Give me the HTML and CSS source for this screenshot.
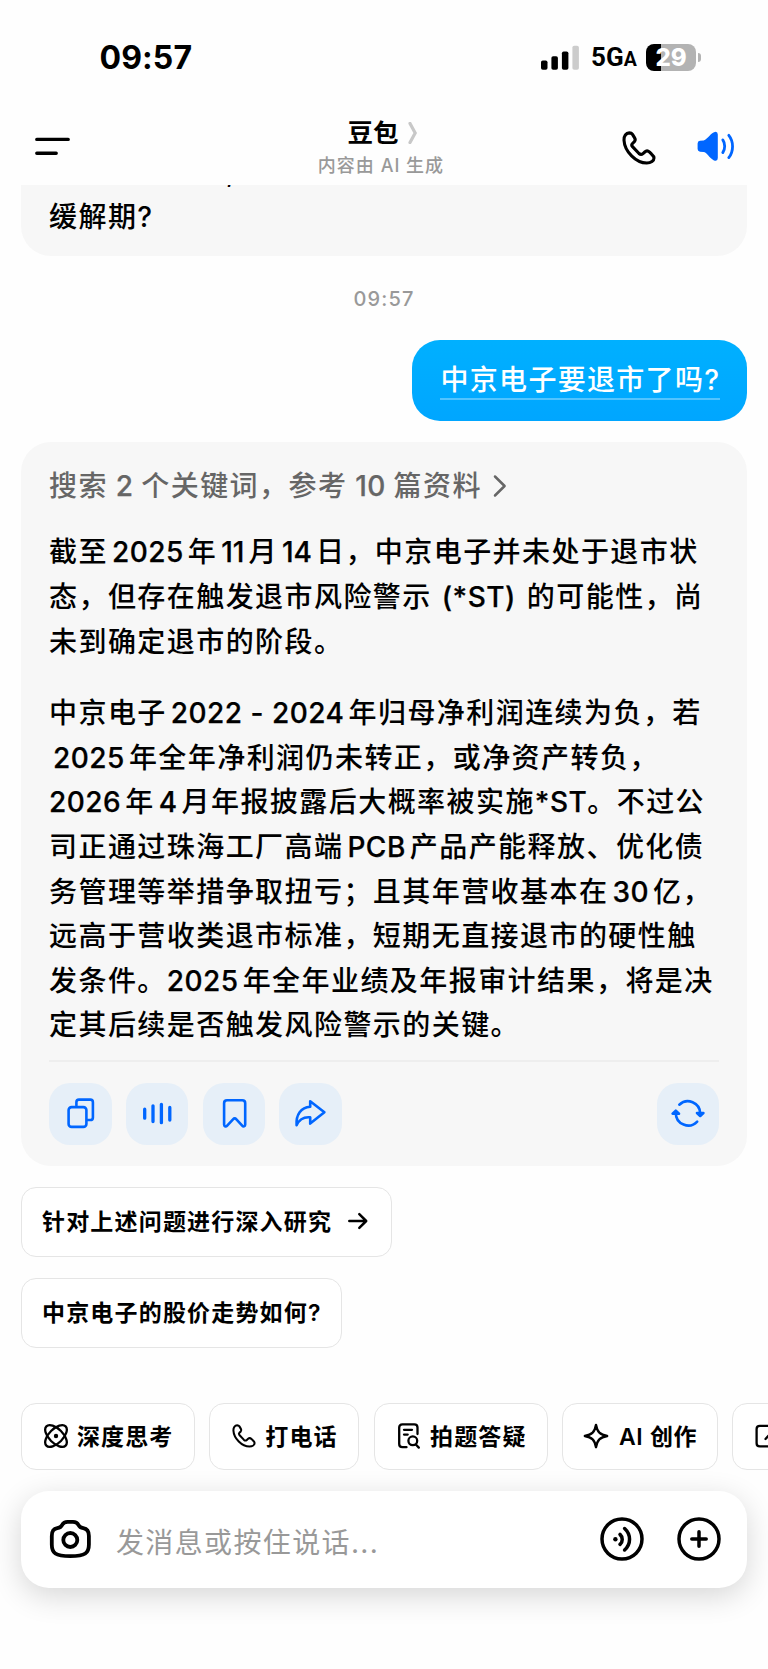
FILE: index.html
```html
<!DOCTYPE html>
<html lang="zh-CN">
<head>
<meta charset="utf-8">
<title>豆包</title>
<link rel="stylesheet" href="styles.css">
</head>
<body>
<svg class="defs" width="0" height="0">
  <symbol id="phone" viewBox="0 0 34 34">
    <path d="M7.3 1.9C4 2 1.8 5 2 9.2C2.6 20.5 14 32 24.8 32C29 32 32 29.6 32 27C32 25.5 31 24.4 29.6 23.2L27.6 21.2C26 19.7 24.2 19.7 22.8 21L21 22.6C19.6 23.8 18.4 23.8 17 22.5L10.5 15.6C9.5 14.5 9.5 13.5 10.5 12.5L12.4 10.6C13.5 9.5 13.5 8.4 12.6 6.9L10.5 3.4C9.8 2.3 8.6 1.9 7.3 1.9Z"/>
  </symbol>
</svg>
<div class="phone">
  <div class="status">
    <div class="clock">09:57</div>
    <div class="indicators">
      <svg width="38" height="26" viewBox="0 0 38 26">
        <rect x="0" y="15.5" width="6.5" height="9.3" rx="1.8"/>
        <rect x="10.4" y="11.3" width="6.5" height="13.5" rx="1.8"/>
        <rect x="20.9" y="6.4" width="6.5" height="18.4" rx="1.8"/>
        <rect x="31.4" y="0.8" width="6.5" height="24" rx="1.8" fill="#ccc"/>
      </svg>
      <div class="network">5G<small>A</small></div>
      <div class="battery">29</div>
      <div class="nub"></div>
    </div>
  </div>

  <header class="header">
    <svg class="menu" width="36" height="20" viewBox="0 0 36 20"><path d="M2.8 3.4H34.2M2.8 17.2H22.2"/></svg>
    <div class="title">
      <h1>豆包<svg width="10" height="22" viewBox="0 0 10 22"><path d="M2 1.4L7.2 11L2 20.6"/></svg></h1>
      <p>内容由 AI 生成</p>
    </div>
    <div class="tools">
      <svg class="call" width="34" height="34"><use href="#phone"/></svg>
      <svg class="speaker" width="38" height="31" viewBox="0 0 38 31">
        <path class="solid" d="M.6 12.5Q.6 10 3 9.8L6.6 9.4C9.8 9 12 3.8 17 1.2Q20.6-.2 20.8 3.5V27Q20.6 31 17 29.4C12 26.8 9.8 21.5 6.6 21.1L3 20.7Q.6 20.4.6 18Z"/>
        <path d="M25.8 8.9C28.3 12.4 28.3 18 25.8 21.6M31.8 4.3C36.8 10.5 36.8 20.3 31.8 26.6"/>
      </svg>
    </div>
  </header>

  <main class="chat">
    <div class="previous"><div class="line cut"><span>,</span></div><div class="line">缓解期?</div></div>
    <time>09:57</time>
    <div class="question"><span>中京电子要退市了吗?</span></div>
    <article class="answer">
      <div class="sources">搜索<b> 2 </b>个关键词，参考<b> 10 </b>篇资料<svg width="14" height="24" viewBox="0 0 14 24"><path d="M2 2.5L11.6 12L2 21.5"/></svg></div>
      <p>
        <span class="line">截至<b>2025</b>年<b class="tight">11</b>月<b class="tight">14</b>日，中京电子并未处于退市状</span>
        <span class="line">态，但存在触发退市风险警示<b class="paren">(*ST)</b>的可能性，尚</span>
        <span class="line">未到确定退市的阶段。</span>
      </p>
      <p>
        <span class="line">中京电子<b>2022 - 2024</b>年归母净利润连续为负，若</span>
        <span class="line"><b class="indent">2025</b>年全年净利润仍未转正，或净资产转负，</span>
        <span class="line"><b class="first">2026</b>年<b>4</b>月年报披露后大概率被实施<b class="st">*ST</b>。不过公</span>
        <span class="line">司正通过珠海工厂高端<b>PCB</b>产品产能释放、优化债</span>
        <span class="line">务管理等举措争取扭亏；且其年营收基本在<b>30</b>亿，</span>
        <span class="line">远高于营收类退市标准，短期无直接退市的硬性触</span>
        <span class="line">发条件。<b class="first">2025</b>年全年业绩及年报审计结果，将是决</span>
        <span class="line">定其后续是否触发风险警示的关键。</span>
      </p>
      <div class="actions">
        <button><svg viewBox="0 0 62.5 62.5"><rect x="19.6" y="25.1" width="17.8" height="19.8" rx="3"/><path d="M27.4 23.5V20.2Q27.4 17.6 30 17.6H41.3Q43.9 17.6 43.9 20.2V35.4Q43.9 38 41.3 38H38.5"/></svg></button>
        <button><svg class="wave" viewBox="0 0 62.5 62.5"><path d="M18.7 27.2V36.2M27 23.8V39.5M35.4 22.3V40.7M43.8 25.5V38"/></svg></button>
        <button><svg viewBox="0 0 62.5 62.5"><path d="M21.1 21.2Q21.1 18.3 24 18.3H39.3Q42.2 18.3 42.2 21.2V42.6C42.2 44.6 40.4 45 39.2 43.6L33.4 37.3Q31.7 35.5 30 37.3L24.2 43.6C23 45 21.1 44.6 21.1 42.6Z"/></svg></button>
        <button><svg viewBox="0 0 62.5 62.5"><path d="M31.2 19.2L45.4 30.3L31.2 41.6V35.3C25 34.7 20.4 37 17.6 43.2C16.8 33 22 25.3 31.2 24.8Z"/></svg></button>
        <button class="refresh"><svg viewBox="0 0 62.5 62.5"><path d="M22.3 22.7A12.4 12.4 0 0 1 43.2 31.5M18.8 31A12.4 12.4 0 0 0 40.2 39.6"/><path class="solid" d="M40 31H46.4L43.2 34ZM15.6 31.7H22L18.8 28.7Z"/></svg></button>
      </div>
    </article>
    <div class="suggestions">
      <button class="deep">针对上述问题进行深入研究<svg width="20" height="18" viewBox="0 0 20 18"><path d="M1.3 9H17.8M11.3 2.2L18.2 9L11.3 15.8"/></svg></button>
      <button>中京电子的股价走势如何?</button>
    </div>
  </main>

  <nav class="shortcuts">
    <button><svg width="24" height="24" viewBox="0 0 24 24"><ellipse cx="12" cy="12" rx="13.6" ry="7" transform="rotate(45 12 12)"/><ellipse cx="12" cy="12" rx="13.6" ry="7" transform="rotate(-45 12 12)"/><circle class="dot" cx="12" cy="12" r="2.2"/></svg>深度思考</button>
    <button><svg class="handset" width="24" height="24"><use href="#phone"/></svg>打电话</button>
    <button class="photo"><svg width="22" height="26" viewBox="0 0 22 26"><path d="M8.5 24.2H4.4Q1.2 24.2 1.2 21V4.6Q1.2 1.4 4.4 1.4H16.3Q19.5 1.4 19.5 4.6V11M6 6.8H14M6 11.6H9.7M18.1 21.8L20.8 24.6"/><circle cx="14.8" cy="17.8" r="4.4"/></svg>拍题答疑</button>
    <button class="create"><svg width="26" height="26" viewBox="0 0 26 26"><path d="M13 1.8C14.2 9 17 11.8 24.2 13C17 14.2 14.2 17 13 24.2C11.8 17 9 14.2 1.8 13C9 11.8 11.8 9 13 1.8Z"/></svg>AI 创作</button>
    <button><svg width="24" height="24" viewBox="0 0 24 24"><path d="M16 1.8H4.8Q1.6 1.8 1.6 5V19.2Q1.6 22.4 4.8 22.4H19Q22.2 22.4 22.2 19.2V12M10.5 15L21.5 3"/></svg></button>
  </nav>

  <footer class="composer">
    <svg class="camera" width="43" height="40" viewBox="0 0 43 40"><path d="M8.3 9.2C11 8.7 12.3 7.6 13.2 5.8C14.3 3.7 16 2.9 18.6 2.9H24C26.6 2.9 28.3 3.7 29.4 5.8C30.3 7.6 31.6 8.7 34.3 9.2C38.6 10 39.9 12.4 39.9 17V25.5C39.9 34 36.5 37.1 21.3 37.1S2.8 34 2.8 25.5V17C2.8 12.4 4 10 8.3 9.2Z"/><circle cx="21.3" cy="21" r="7"/></svg>
    <div class="placeholder">发消息或按住说话...</div>
    <svg class="voice" width="44" height="44" viewBox="0 0 44 44"><circle cx="22" cy="22" r="20"/><circle class="dot" cx="15.4" cy="22.3" r="2.2"/><path d="M20 17.4C23 20.2 23 24.6 20 27.4M24.6 11.5C31.2 17.5 31.2 27 24.6 33"/></svg>
    <svg width="44" height="44" viewBox="0 0 44 44"><circle cx="22" cy="22" r="20"/><path d="M14.8 22H29.2M22 14.8V29.2"/></svg>
  </footer>
</div>
</body>
</html>
```
FILE: styles.css
```css
* { box-sizing: border-box; margin: 0; padding: 0; }
body { background: #fff; color: #000; font-family: Inter, "Noto Sans CJK SC", sans-serif; }
button { background: none; border: 0; font: inherit; color: inherit; display: flex; align-items: center; flex: none; white-space: nowrap; }
svg { display: block; flex: none; fill: none; stroke: #000; stroke-linecap: round; stroke-linejoin: round; }
.defs { position: absolute; }
.phone { width: 768px; height: 1669px; overflow: hidden; display: flex; flex-direction: column; background: #fefefe; }

.status { height: 105px; flex: none; padding: 10px 67.5px 0 99.5px; display: flex; justify-content: space-between; align-items: center; }
.clock { font-size: 32px; font-weight: 700; letter-spacing: 0.1px; }
.indicators { display: flex; align-items: center; height: 27px; }
.indicators svg { fill: #000; stroke: none; }
.network { width: 47px; margin-left: 12px; margin-right: 8px; font: 700 26px/27px Roboto, sans-serif; white-space: nowrap; padding-top: 2px; }
.network small { font-size: 19.5px; }
.battery { width: 50px; height: 27px; border-radius: 8px; background: linear-gradient(90deg, #000 15px, #b3b3b3 15px); color: #fff; font-size: 24px; font-weight: 800; line-height: 27px; text-align: center; letter-spacing: -0.2px; }
.nub { width: 3px; height: 9px; margin-left: 1.5px; background: #b3b3b3; border-radius: 0 4px 4px 0; }

.header { height: 80px; flex: none; display: grid; grid-template-columns: 200px 1fr 200px; padding: 0 33px 0 34px; }
.menu { margin-top: 31px; stroke-width: 3.4; }
.title { text-align: center; padding-top: 11px; }
.title h1 { display: flex; justify-content: center; align-items: center; font-size: 25.5px; line-height: 34px; font-weight: 700; margin-right: 4px; }
.title h1 svg { margin-left: 9px; stroke: #c8c8c8; stroke-width: 3.2; stroke-linejoin: miter; stroke-linecap: round; }
.title p { color: #999; font-size: 18px; line-height: 28px; letter-spacing: 1px; margin-top: 2px; margin-right: 7px; white-space: nowrap; font-weight: 500; }
.tools { display: flex; justify-content: flex-end; gap: 41px; padding-top: 26px; }
.call { stroke-width: 3.1; }
.speaker { stroke: #06f; stroke-width: 2.8; }
.speaker .solid { fill: #06f; stroke: none; }

.chat { flex: none; height: 1218px; padding: 0 21px; display: flex; flex-direction: column; }
.previous { height: 71px; flex: none; background: #f7f7f7; border-radius: 0 0 30px 30px; padding: 0 28px; overflow: hidden; display: flex; flex-direction: column; justify-content: flex-end; padding-bottom: 16.5px; }
.line { display: block; font-size: 28px; line-height: 44.6px; height: 44.6px; flex: none; font-weight: 500; letter-spacing: 1.44px; white-space: nowrap; }
.cut { padding-left: 177px; }
time { flex: none; text-align: center; color: #999; font-size: 20px; font-weight: 500; letter-spacing: 1.1px; line-height: 24px; margin-top: 31px; }
.question { align-self: flex-end; flex: none; width: 335px; height: 81px; margin-top: 29px; border-radius: 28px; padding: 18px 27.5px; background: linear-gradient(#00b0ff, #00a6ff); }
.question span { display: block; height: 42px; border-bottom: 2.5px solid rgba(255,255,255,.32); color: #fff; font-size: 28px; font-weight: 500; letter-spacing: 1.3px; line-height: 44px; padding-left: 1px; white-space: nowrap; }
.answer { flex: none; height: 724px; margin-top: 21px; background: #f7f7f7; border-radius: 30px; padding: 22px 28px 21px; display: flex; flex-direction: column; }
.sources { color: #666; display: flex; align-items: center; font-size: 28px; line-height: 44px; letter-spacing: 1.44px; font-weight: 500; white-space: pre; }
.sources b { margin: 0; letter-spacing: 0.4px; }
.sources svg { margin-left: 11px; stroke: #666; stroke-width: 2.5; }
.answer p { margin-top: 22.4px; }
.answer p + p { margin-top: 27px; }
b { font-weight: 500; margin: 0 4px; letter-spacing: 0.5px; -webkit-text-stroke: 0.25px currentColor; }
b.tight { letter-spacing: 0; }
b.paren { margin: 0 11px 0 10px; }
b.st { margin: 0; }
b.first { margin-left: 0; }
.actions { margin-top: auto; border-top: 2px solid #eee; padding-top: 20.5px; display: flex; gap: 14.3px; }
.actions button { width: 62.5px; height: 62.5px; border-radius: 21px; background: #e6eff8; }
.actions svg { width: 62.5px; height: 62.5px; stroke: #06f; stroke-width: 2.6; margin-top: -1px; }
.actions .wave { stroke-width: 3.3; }
.actions .solid { fill: #06f; }
.actions .refresh { margin-left: auto; }

.suggestions { display: flex; flex-direction: column; align-items: flex-start; gap: 21px; margin-top: 21px; }
.suggestions button, .shortcuts button { border: 1.5px solid #e5e5e5; border-radius: 15px; background: #fff; font-size: 23px; font-weight: 600; letter-spacing: 1.1px; padding: 0 20px 4px; }
.suggestions button { height: 70px; width: 321px; letter-spacing: 1.18px; }
.suggestions .deep { width: 371px; }
.suggestions svg { margin: 2px 0 0 16px; stroke-width: 2.5; }

.shortcuts { flex: none; height: 67px; display: flex; gap: 14.3px; padding-left: 21px; }
.shortcuts button { height: 67px; width: 174px; padding: 0 0 3px 21.5px; }
.shortcuts svg { margin: 2px 9.5px 0 0; stroke-width: 2.3; }
.shortcuts .dot { fill: #000; stroke: none; }
.shortcuts .handset { stroke-width: 2.9; }
.shortcuts button:nth-child(2) { width: 150px; }
.shortcuts .photo { padding-left: 23.5px; }
.shortcuts .photo svg { margin-right: 10px; }
.shortcuts .create { width: 156px; padding-left: 20.5px; letter-spacing: 0.7px; }

.composer { flex: none; height: 97px; margin: 21px 21px 0; border-radius: 28px; background: #fff; box-shadow: 0 8px 30px rgba(0,0,0,.16); padding: 0 26.5px 2px 28px; display: flex; align-items: center; }
.composer svg { stroke-width: 3.5; }
.composer .camera { stroke-width: 3.8; }
.composer .dot { fill: #000; stroke: none; }
.placeholder { flex: 1; margin-left: 24px; padding-top: 5px; color: #999; font-size: 28px; letter-spacing: 1.36px; }
.voice { margin-right: 32.5px; }
```
